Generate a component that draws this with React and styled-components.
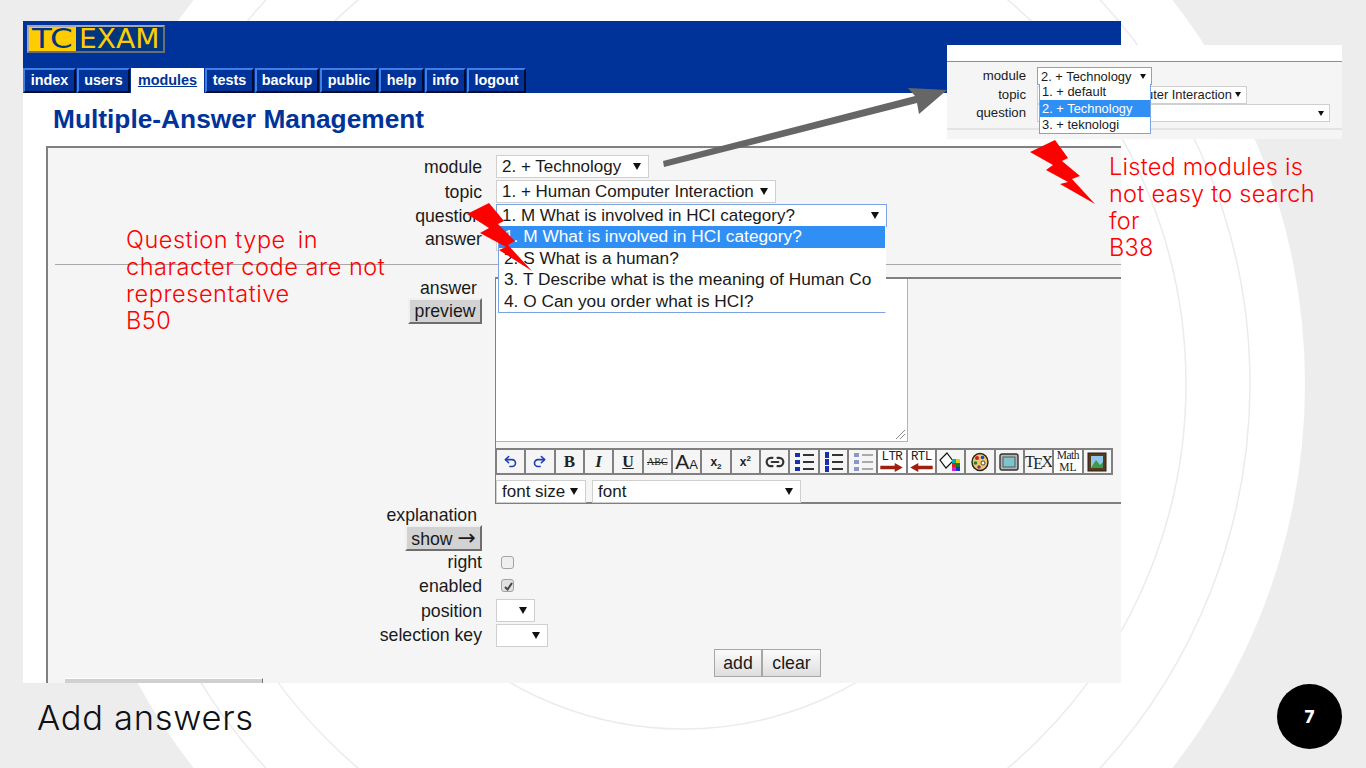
import React from 'react';
import styled, {createGlobalStyle} from 'styled-components';
import {Undo2, Redo2, Link2} from 'lucide-react';

const GlobalStyle = createGlobalStyle`
    html, body {
        margin: 0;
        padding: 0;
        overflow: hidden;
    }
    * {
        box-sizing: border-box;
    }
`

const Page = styled.div`
    position: relative;
    width: 1366px;
    height: 768px;
    overflow: hidden;
    background: #ededed;
    padding-top: 21px;
    font-family: "Liberation Sans", Arial, sans-serif;
    color: #1a1a1a;
`

const Rings = styled.svg`
    position: absolute;
    left: 0;
    top: 0;
`

const Slide = styled.div`
    position: relative;
    display: flex;
    flex-direction: column;
    width: 1098px;
    height: 662px;
    margin-left: 23px;
    background: #fff;
    overflow: hidden;
`

const Header = styled.div`
    flex: none;
    display: flex;
    flex-direction: column;
    justify-content: space-between;
    height: 72px;
    padding-top: 4px;
    background: #003399;
`

const Logo = styled.div`
    display: flex;
    width: 138px;
    height: 28px;
    margin-left: 4px;
    border: 2px solid #8a8f99;
    border-color: #a4a8ae #6b7078 #6b7078 #a4a8ae;
    background: #00367d;
    overflow: hidden;
`

const LogoPart = styled.span`
    display: block;
    width: ${props => props.$w}px;
    height: 24px;
    padding-left: 3px;
    background: ${props => props.$on ? '#ffcc00' : 'transparent'};
    color: ${props => props.$on ? '#00367d' : '#ffcc00'};
    font-family: "DejaVu Sans", sans-serif;
    font-size: 26px;
    line-height: 24px;
    white-space: nowrap;
    span {
        display: inline-block;
        transform: scaleX(${props => props.$sx});
        transform-origin: left center;
    }
`

const Tabs = styled.div`
    display: flex;
    gap: 1px;
    height: 25px;
`

const Tab = styled.div`
    width: ${props => props.$w}px;
    height: 25px;
    border: 2px solid;
    border-color: ${props => props.$active ? '#fff' : '#3f7fe8 #0a0a2a #0a0a2a #3f7fe8'};
    background: ${props => props.$active ? '#fff' : '#003399'};
    color: ${props => props.$active ? '#003399' : '#fff'};
    font-size: 14.4px;
    font-weight: bold;
    line-height: 21px;
    text-align: center;
    text-decoration: ${props => props.$active ? 'underline' : 'none'};
`

const Title = styled.h1`
    flex: none;
    margin: 11px 0 0 30px;
    height: 42px;
    color: #003399;
    font-size: 26.3px;
    font-weight: bold;
    line-height: 30px;
`

const FormPanel = styled.div`
    flex: none;
    height: 540px;
    margin-left: 23px;
    padding-top: 6px;
    border-top: 2px solid #808080;
    border-left: 2px solid #808080;
    background: #f5f5f5;
    font-size: 17.7px;
`

const Row = styled.div`
    display: grid;
    grid-template-columns: 434px 1fr;
    column-gap: 14px;
    height: ${props => props.$h}px;
    align-items: center;
`

const Label = styled.div`
    padding-top: ${props => props.$nudge || 0}px;
    padding-right: ${props => props.$inset || 0}px;
    text-align: right;
    line-height: 20px;
    white-space: nowrap;
`

const FieldSelect = styled.div`
    position: relative;
    display: flex;
    align-items: center;
    width: ${props => props.$w}px;
    height: ${props => props.$h || 23}px;
    padding: 0 ${props => props.$small ? 5 : 7}px 0 ${props => props.$small ? 3 : 5}px;
    border: 1px solid ${props => props.$focus ? '#7ba3e6' : '#cfcfcf'};
    background: #fff;
    font-size: ${props => props.$small ? 12.9 : 17}px;
    white-space: nowrap;
    &::after {
        content: "";
        flex: none;
        margin-left: auto;
        border-left: ${props => props.$small ? 3 : 4}px solid transparent;
        border-right: ${props => props.$small ? 3 : 4}px solid transparent;
        border-top: ${props => props.$small ? 5 : 7}px solid #111;
    }
`

const Options = styled.div`
    position: absolute;
    left: ${props => props.$left}px;
    top: 100%;
    right: ${props => props.$right}px;
    z-index: 3;
    border: 1px solid #7ba3e6;
    border-top: 0;
    border-right-color: ${props => props.$open ? '#fff' : '#7ba3e6'};
    background: #fff;
`

const Option = styled.div`
    height: ${props => props.$h}px;
    padding-left: ${props => props.$pad}px;
    background: ${props => props.$on ? '#2f8ff5' : 'transparent'};
    color: ${props => props.$on ? '#fff' : '#1a1a1a'};
    font-size: ${props => props.$size}px;
    line-height: ${props => props.$h}px;
    white-space: nowrap;
    overflow: hidden;
`

const Rule = styled.div`
    height: 1px;
    margin: 13px 0 12px 7px;
    background: #a8a8a8;
`

const EditorRow = styled.div`
    display: grid;
    grid-template-columns: 434px 1fr;
    column-gap: 13px;
`

const LabelStack = styled.div`
    display: flex;
    flex-direction: column;
    align-items: flex-end;
    padding-top: ${props => props.$top}px;
`

const PushButton = styled.div`
    height: ${props => props.$h}px;
    padding: 0 ${props => props.$pad}px;
    border: 2px solid;
    border-color: #f0f0f0 #6e6e6e #6e6e6e #f0f0f0;
    background: #d2d2d2;
    line-height: ${props => props.$h - 4}px;
    white-space: nowrap;
`

const LongArrow = styled.span`
    font-family: "DejaVu Sans", sans-serif;
    font-size: 22px;
    line-height: 1;
`

const Editor = styled.div`
    height: 227px;
    border-top: 2px solid #808080;
    border-left: 1px solid #808080;
    border-bottom: 2px solid #808080;
`

const TextArea = styled.div`
    position: relative;
    width: 412px;
    height: 163px;
    border: 1px solid #b4b4b4;
    border-top: 0;
    border-left: 0;
    background: #fff;
    svg {
        position: absolute;
        right: 1px;
        bottom: 1px;
    }
`

const Toolbar = styled.div`
    display: flex;
    gap: 2px;
    width: 618px;
    height: 27px;
    margin: 6px 0 0 -1px;
    padding: 2px;
    background: #808080;
`

const Tool = styled.div`
    flex: 1;
    display: flex;
    flex-direction: ${props => props.$stack ? 'column' : 'row'};
    align-items: center;
    justify-content: center;
    background: ${props => props.$plain ? '#fff' : '#f5f5f5'};
    overflow: hidden;
    color: #222;
    font-family: "Liberation Serif", "Times New Roman", serif;
    line-height: 1;
`

const Glyph = styled.span`
    font-size: ${props => props.$size || 16}px;
    font-weight: ${props => props.$bold ? 'bold' : 'normal'};
    font-style: ${props => props.$italic ? 'italic' : 'normal'};
    font-family: ${props => props.$sans ? '"Liberation Sans", sans-serif' : 'inherit'};
    text-decoration: ${props => props.$line || 'none'};
    line-height: 1;
    letter-spacing: ${props => props.$track || 0}px;
    margin-top: ${props => props.$drop || 0}px;
    sub, sup {
        font-size: 8px;
        line-height: 0;
    }
`

const FontRow = styled.div`
    display: flex;
    gap: 6px;
    margin-top: 5px;
`

const CheckBox = styled.div`
    position: relative;
    width: 13px;
    height: 13px;
    margin-left: 5px;
    border: 1px solid #a3a3a3;
    border-radius: 3px;
    background: ${props => props.$on ? '#e0e0e0' : '#efefef'};
    svg {
        position: absolute;
        left: 1px;
        top: 1px;
    }
`

const ActionRow = styled.div`
    display: flex;
    height: 28px;
    margin: 2px 0 0 666px;
`

const ActionButton = styled.div`
    width: ${props => props.$w}px;
    height: 28px;
    border: 1px solid #a6a6a6;
    background: linear-gradient(#fbfbfb, #dedede);
    line-height: 26px;
    text-align: center;
`

const CutBar = styled.div`
    width: 198px;
    height: 6px;
    margin: 1px 0 0 17px;
    border-top: 1px solid #fff;
    border-right: 1px solid #777;
    background: #d0d0d0;
`

const Footer = styled.div`
    position: relative;
    display: flex;
    justify-content: space-between;
    align-items: flex-start;
    padding: 1px 24px 0 37px;
`

const Caption = styled.div`
    margin-top: 12px;
    color: #111;
    font-family: Inter, sans-serif;
    font-size: 34.5px;
    font-weight: 300;
    letter-spacing: 0.7px;
    line-height: 44px;
`

const Badge = styled.div`
    display: flex;
    align-items: center;
    justify-content: center;
    width: 65px;
    height: 65px;
    border-radius: 50%;
    background: #000;
    color: #fff;
    font-family: Inter, sans-serif;
    font-size: 17px;
    font-weight: 800;
`

const Note = styled.div`
    position: absolute;
    z-index: 5;
    left: ${props => props.$left}px;
    top: ${props => props.$top}px;
    color: #ff0000;
    font-family: Inter, sans-serif;
    font-size: 23.5px;
    font-weight: 300;
    letter-spacing: ${props => props.$track}px;
    line-height: 27px;
    white-space: nowrap;
`

const Inset = styled.div`
    position: absolute;
    z-index: 4;
    left: 947px;
    top: 45px;
    width: 395px;
    height: 94px;
    background: #fff;
    font-size: 13.2px;
`

const InsetBody = styled.div`
    height: 78px;
    margin-top: 16px;
    padding-top: 4px;
    border-top: 1px solid #8c8c8c;
    background: #f5f5f5;
    display: inline-block;
    width: 100%;
`

const InsetRow = styled.div`
    display: grid;
    grid-template-columns: 79px 1fr;
    column-gap: 11px;
    align-items: center;
    height: 18.5px;
`

const InsetRule = styled.div`
    height: 2px;
    margin-top: 6px;
    background: #e4e4e4;
`

const Overlay = styled.svg`
    position: absolute;
    z-index: 6;
    left: 0;
    top: 0;
    pointer-events: none;
`

const MiniLabel = styled.span`
    font-family: ${props => props.$mono ? '"Liberation Mono", monospace' : 'inherit'};
    font-size: ${props => props.$size}px;
    line-height: ${props => props.$size}px;
    letter-spacing: ${props => props.$track || 0}px;
`

const BulletList = ({color, dot, numbered}) => (
    <svg width="22" height="20" viewBox="0 0 22 20">
        {[3, 10, 17].map(y => (
            <g key={y}>
                {numbered
                    ? <rect x="3" y={y - 3} width="4" height="6" fill={dot}/>
                    : <rect x="2" y={y - 2} width="5" height="4" fill={dot}/>}
                <rect x="10" y={y - 1} width="11" height="2" fill={color}/>
            </g>
        ))}
    </svg>
)

const Bucket = () => (
    <svg width="23" height="22" viewBox="0 0 23 22">
        <polygon points="8,2 14,10 7,17 1,9" fill="#fff" stroke="#111" strokeWidth="1.2"/>
        <rect x="13" y="8" width="4" height="4" fill="#00b0b0"/>
        <rect x="17" y="8" width="4" height="4" fill="#e0d000"/>
        <rect x="13" y="12" width="4" height="4" fill="#e02020"/>
        <rect x="17" y="12" width="4" height="4" fill="#108020"/>
        <rect x="13" y="16" width="4" height="4" fill="#d020d0"/>
        <rect x="17" y="16" width="4" height="4" fill="#2030d0"/>
    </svg>
)

const Palette = () => (
    <svg width="20" height="20" viewBox="0 0 20 20">
        <ellipse cx="10" cy="10" rx="8" ry="8.5" fill="#f0c868" stroke="#222" strokeWidth="1.4"/>
        <circle cx="7" cy="6" r="2" fill="#d02020"/>
        <circle cx="12.5" cy="5.5" r="1.8" fill="#2040d0"/>
        <circle cx="5.5" cy="11" r="1.8" fill="#208030"/>
        <circle cx="9" cy="15" r="1.8" fill="#803090"/>
        <circle cx="13" cy="11" r="2" fill="#fff" stroke="#222" strokeWidth="0.8"/>
    </svg>
)

const Screen = () => (
    <svg width="20" height="18" viewBox="0 0 20 18">
        <rect x="1" y="1" width="18" height="16" rx="2" fill="#b4b4b4" stroke="#333" strokeWidth="1.4"/>
        <rect x="4" y="4" width="12" height="10" fill="#7fc4cc" stroke="#444" strokeWidth="0.8"/>
    </svg>
)

const Picture = () => (
    <svg width="20" height="20" viewBox="0 0 20 20">
        <rect x="1" y="1" width="18" height="18" fill="#5a3a18" stroke="#222" strokeWidth="1"/>
        <rect x="4" y="4" width="12" height="12" fill="#8fc8e8"/>
        <polygon points="4,16 9,8 13,13 16,10 16,16" fill="#3f9a4a"/>
    </svg>
)

const TabNames = [
    ['index', 53], ['users', 53], ['modules', 73], ['tests', 49], ['backup', 64],
    ['public', 58], ['help', 45], ['info', 41], ['logout', 59],
];

const QuestionOptions = [
    '1. M What is involved in HCI category?',
    '2. S What is a human?',
    '3. T Describe what is the meaning of Human Co',
    '4. O Can you order what is HCI?',
];

const App = () => (
    <Page>
        <GlobalStyle/>
        <Rings width="1366" height="768">
            <circle cx="683" cy="384" r="622" fill="#fff"/>
            <circle cx="683" cy="384" r="567" fill="none" stroke="#ebebeb" strokeWidth="1.5"/>
            <circle cx="683" cy="384" r="503" fill="none" stroke="#ebebeb" strokeWidth="1.5"/>
            <circle cx="683" cy="384" r="345" fill="none" stroke="#ebebeb" strokeWidth="1.5"/>
        </Rings>

        <Slide>
            <Header>
                <Logo>
                    <LogoPart $on $w={47} $sx={1.25}><span>TC</span></LogoPart>
                    <LogoPart $w={87} $sx={1.08}><span>EXAM</span></LogoPart>
                </Logo>
                <Tabs>
                    {TabNames.map(([name, w]) => (
                        <Tab key={name} $w={w} $active={name === 'modules'}>{name}</Tab>
                    ))}
                </Tabs>
            </Header>
            <Title>Multiple-Answer Management</Title>
            <FormPanel>
                <Row $h={25}>
                    <Label>module</Label>
                    <FieldSelect $w={153}>2. + Technology</FieldSelect>
                </Row>
                <Row $h={25}>
                    <Label>topic</Label>
                    <FieldSelect $w={280}>1. + Human Computer Interaction</FieldSelect>
                </Row>
                <Row $h={23}>
                    <Label>question</Label>
                    <FieldSelect $w={391} $focus>
                        1. M What is involved in HCI category?
                        <Options $left={1} $right={0} $open>
                            {QuestionOptions.map((text, i) => (
                                <Option key={text} $on={i === 0} $h={21.6} $pad={5} $size={17.3}>{text}</Option>
                            ))}
                        </Options>
                    </FieldSelect>
                </Row>
                <Row $h={24}>
                    <Label>answer</Label>
                    <FieldSelect $w={120}/>
                </Row>
                <Rule/>
                <EditorRow>
                    <LabelStack $top={1}>
                        <Label $inset={5}>answer</Label>
                        <PushButton $h={26} $pad={4.5}>preview</PushButton>
                    </LabelStack>
                    <Editor>
                        <TextArea>
                            <svg width="11" height="11" viewBox="0 0 11 11">
                                <path d="M10 1 L1 10 M10 5 L5 10" stroke="#888" strokeWidth="1"/>
                            </svg>
                        </TextArea>
                        <Toolbar>
                            <Tool><Undo2 size={15} color="#1d3fb8" strokeWidth={2.6}/></Tool>
                            <Tool><Redo2 size={15} color="#1d3fb8" strokeWidth={2.6}/></Tool>
                            <Tool><Glyph $bold $size={17}>B</Glyph></Tool>
                            <Tool><Glyph $bold $italic $size={17}>I</Glyph></Tool>
                            <Tool><Glyph $bold $line="underline" $size={16}>U</Glyph></Tool>
                            <Tool><Glyph $line="line-through" $size={10}>ABC</Glyph></Tool>
                            <Tool><Glyph $sans $size={21}>A</Glyph><Glyph $sans $size={13} $drop={5}>A</Glyph></Tool>
                            <Tool><Glyph $sans $bold $size={12}>x<sub>2</sub></Glyph></Tool>
                            <Tool><Glyph $sans $bold $size={12}>x<sup>2</sup></Glyph></Tool>
                            <Tool><Link2 size={20} color="#333" strokeWidth={2.6}/></Tool>
                            <Tool><BulletList color="#333" dot="#1a2fb0"/></Tool>
                            <Tool><BulletList color="#333" dot="#1a2fb0" numbered/></Tool>
                            <Tool><BulletList color="#aaa" dot="#8a97c8"/></Tool>
                            <Tool $stack $plain>
                                <MiniLabel $mono $size={12.5} $track={-0.6}>LTR</MiniLabel>
                                <svg width="26" height="9" viewBox="0 0 26 10">
                                    <polygon points="0,3 16,3 16,0 25,5 16,10 16,7 0,7" fill="#a02010"/>
                                </svg>
                            </Tool>
                            <Tool $stack $plain>
                                <MiniLabel $mono $size={12.5} $track={-0.6}>RTL</MiniLabel>
                                <svg width="26" height="9" viewBox="0 0 26 10">
                                    <polygon points="26,3 10,3 10,0 1,5 10,10 10,7 26,7" fill="#a02010"/>
                                </svg>
                            </Tool>
                            <Tool><Bucket/></Tool>
                            <Tool><Palette/></Tool>
                            <Tool><Screen/></Tool>
                            <Tool>
                                <Glyph $size={16} $track={-1.5}>T</Glyph>
                                <Glyph $size={16} $track={-1.5} $drop={4}>E</Glyph>
                                <Glyph $size={16} $track={-1}>X</Glyph>
                            </Tool>
                            <Tool $stack $plain>
                                <MiniLabel $size={11.5} $track={-0.5}>Math</MiniLabel>
                                <MiniLabel $size={11.5}>ML</MiniLabel>
                            </Tool>
                            <Tool><Picture/></Tool>
                        </Toolbar>
                        <FontRow>
                            <FieldSelect $w={90}>font size</FieldSelect>
                            <FieldSelect $w={209}>font</FieldSelect>
                        </FontRow>
                    </Editor>
                </EditorRow>
                <Row $h={21}>
                    <Label $inset={5} $nudge={1}>explanation</Label>
                </Row>
                <Row $h={26}>
                    <LabelStack $top={0}>
                        <PushButton $h={26} $pad={4}>show <LongArrow>→</LongArrow></PushButton>
                    </LabelStack>
                </Row>
                <Row $h={22}>
                    <Label>right</Label>
                    <CheckBox/>
                </Row>
                <Row $h={25}>
                    <Label>enabled</Label>
                    <CheckBox $on>
                        <svg width="11" height="11" viewBox="0 0 11 11">
                            <path d="M2 6 L4.5 8.5 L9 2" fill="none" stroke="#444" strokeWidth="2"/>
                        </svg>
                    </CheckBox>
                </Row>
                <Row $h={25}>
                    <Label>position</Label>
                    <FieldSelect $w={39}/>
                </Row>
                <Row $h={24}>
                    <Label>selection key</Label>
                    <FieldSelect $w={52}/>
                </Row>
                <ActionRow>
                    <ActionButton $w={48}>add</ActionButton>
                    <ActionButton $w={59}>clear</ActionButton>
                </ActionRow>
                <CutBar/>
            </FormPanel>
        </Slide>

        <Footer>
            <Caption>Add answers</Caption>
            <Badge>7</Badge>
        </Footer>

        <Inset>
            <InsetBody>
                <InsetRow>
                    <Label>module</Label>
                    <FieldSelect $small $focus $w={115} $h={18}>
                        2. + Technology
                        <Options $left={1} $right={0}>
                            <Option $h={16} $pad={2}>1. + default</Option>
                            <Option $h={17} $pad={2} $on>2. + Technology</Option>
                            <Option $h={16} $pad={2}>3. + teknologi</Option>
                        </Options>
                    </FieldSelect>
                </InsetRow>
                <InsetRow>
                    <Label>topic</Label>
                    <FieldSelect $small $w={210} $h={18}>1. + Human Computer Interaction</FieldSelect>
                </InsetRow>
                <InsetRow>
                    <Label>question</Label>
                    <FieldSelect $small $w={293} $h={18}/>
                </InsetRow>
                <InsetRule/>
            </InsetBody>
        </Inset>

        <Note $left={126} $top={226} $track={0.55}>
            Question type{'\u2009'} in<br/>
            character code are not<br/>
            representative<br/>
            B50
        </Note>
        <Note $left={1109} $top={153} $track={0.25}>
            Listed modules is<br/>
            not easy to search<br/>
            for<br/>
            B38
        </Note>

        <Overlay width="1366" height="768">
            <polygon points="663,161 915,96 908,88 947,90 919,114 917,103 664,167" fill="#666"/>
            <polygon points="1055,140 1068,158 1062,161 1080,176 1072,179 1095,204 1060,184 1068,182 1046,170 1053,165 1030,152" fill="#ff0000"/>
            <polygon points="489,203 504,221 498,224 515,241 508,245 532,271 499,250 506,247 480,233 489,228 467,214" fill="#ff0000"/>
        </Overlay>
    </Page>
);

export default App;
